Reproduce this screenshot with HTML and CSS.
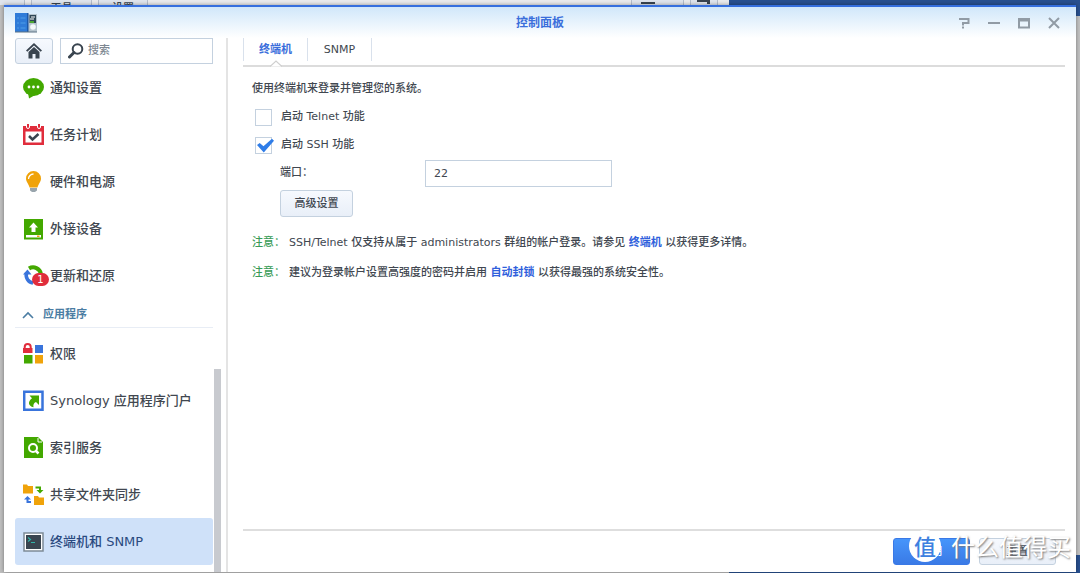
FILE: index.html
```html
<!DOCTYPE html>
<html lang="zh-CN">
<head>
<meta charset="utf-8">
<title>控制面板</title>
<link rel="stylesheet" href="styles.css">
</head>
<body>
<div class="desktop" aria-hidden="true">
  <div class="back-window">
    <div class="back-bar">
      <span class="back-tab back-tab-first"></span>
      <span class="back-tab back-tab-tools">工具</span>
      <span class="back-tab back-tab-set">设置</span>
      <span class="back-space"></span>
      <span class="back-tool"><i class="back-dash"></i></span>
      <span class="back-gap"></span>
      <span class="back-tool back-tool-small"><i class="back-mark"></i></span>
    </div>
  </div>
  <div class="back-right"></div>
</div>
<div class="window">
  <header class="titlebar">
    <svg class="app-icon" viewBox="0 0 22 20" aria-hidden="true">
      <rect x="12" y="1" width="10" height="18" fill="#b4c3cd"/>
      <rect x="0" y="0" width="13" height="19" fill="#2f7bd8"/>
      <rect x="12" y="0" width="1.500" height="19" fill="#1c58a8"/>
      <path d="M2 5h2M2 10h2M2 15h2M5.500 5h5M5.500 10h5M5.500 15h5" stroke="#4f9fe8" stroke-width="1"/>
      <rect x="14.500" y="2" width="6.500" height="8" fill="#2d4656"/>
      <path d="M16 4h4M15 6h4" stroke="#fff"/>
      <path d="M15 9h4" stroke="#54c728" stroke-width="1.500"/>
      <circle cx="18" cy="14" r="2.800" fill="#f3f8fa"/>
      <path d="M0 19h22" stroke="#5d7284"/>
    </svg>
    <h1 class="title">控制面板</h1>
    <div class="window-tools">
      <button class="tool" aria-label="帮助"><svg viewBox="0 0 12 12"><path d="M1 2h9.500v4H5v2.500M4 10.500h2" /></svg></button>
      <button class="tool" aria-label="最小化"><svg viewBox="0 0 12 12"><path d="M0 6h12"/></svg></button>
      <button class="tool" aria-label="最大化"><svg viewBox="0 0 12 12"><path d="M1 2h10v8.500H1zM1 3.500h10"/></svg></button>
      <button class="tool" aria-label="关闭"><svg viewBox="0 0 12 12"><path d="M1 1l10 10M11 1L1 11"/></svg></button>
    </div>
  </header>
  <div class="content">
    <aside class="sidebar">
      <div class="side-main">
        <div class="search-row">
          <button class="home" aria-label="主页"><svg viewBox="0 0 16 16"><path fill="#39444f" d="M8 0L0 7.500l1.300 1.300L8 2.600l6.700 6.200L16 7.500zM8 4L2.500 9v6.500h4V11h3v4.500h4V9z"/></svg></button>
          <label class="search">
            <svg viewBox="0 0 16 16" aria-hidden="true"><circle cx="9.500" cy="6" r="4.800" fill="none" stroke="#39444f" stroke-width="2"/><path d="M6 9.500L1.500 14" stroke="#39444f" stroke-width="3" stroke-linecap="round"/></svg>
            <input class="search-input" type="text" placeholder="搜索" aria-label="搜索">
          </label>
        </div>
        <nav class="nav">
          <a class="item" href="#"><svg class="icon" viewBox="0 0 22 22"><ellipse cx="10.500" cy="10" rx="10.500" ry="9" fill="#43a800"/><path d="M5 16l1 5.500 7-4z" fill="#43a800"/><g fill="#fff"><circle cx="6" cy="10" r="1.400"/><circle cx="10.500" cy="10" r="1.400"/><circle cx="15" cy="10" r="1.400"/></g></svg>通知设置</a>
          <a class="item" href="#"><svg class="icon" viewBox="0 0 22 22"><path d="M0 2h21v19H0z" fill="#e02d3c"/><path d="M2.500 7.500h16v11h-16z" fill="#fff"/><path d="M3.500 0v3a1.500 1.500 0 003 0V0M14.500 0v3a1.500 1.500 0 003 0V0" fill="#e02d3c" stroke="#fff"/><path d="M6 12l3.500 3.500L15.500 10" fill="none" stroke="#39444f" stroke-width="2.500"/></svg>任务计划</a>
          <a class="item" href="#"><svg class="icon" viewBox="0 0 22 22"><path d="M10.500 0a7.500 7.500 0 017.500 7.500c0 3.500-2.500 5-3.500 9h-8C5.500 12.500 3 11 3 7.500A7.500 7.500 0 0110.500 0z" fill="#f0a30a"/><path d="M5.500 8a5 5 0 015-5" fill="none" stroke="#fff" stroke-width="1.300"/><path d="M7 17h7v2.500L12 21H9l-2-1.500z" fill="#99a5ad"/></svg>硬件和电源</a>
          <a class="item" href="#"><svg class="icon" viewBox="0 0 22 22"><path d="M1 1h19v20.500H1z" fill="#43a800"/><path d="M10.500 4.500L15 9.500h-2.500V14h-4V9.500H6z" fill="#fff"/><path d="M3 17h15v2.500H3z" fill="#fff"/><path d="M14 17.500h2.500V19H14z" fill="#f0a30a"/></svg>外接设备</a>
          <a class="item" href="#"><span class="icon-wrap"><svg class="icon" viewBox="0 0 22 22"><path d="M6 3.500A8 8 0 0118 9" fill="none" stroke="#43a800" stroke-width="4"/><path d="M14 8.500h7.500l-3.500 5z" fill="#43a800"/><path d="M10 18A8 8 0 013.500 8" fill="none" stroke="#3974dc" stroke-width="3.500"/><path d="M0 9.500l4.500-5 4 5z" fill="#3974dc"/></svg><span class="badge">1</span></span>更新和还原</a>
          <button class="section" aria-expanded="true"><svg viewBox="0 0 12 8"><path d="M1 7l5-5 5 5" fill="none" stroke="#4b7da3" stroke-width="1.600"/></svg>应用程序</button>
          <a class="item" href="#"><svg class="icon" viewBox="0 0 22 22"><path d="M0 5h9.500v5H0z" fill="#e02d3c"/><path d="M1.700 6V4a3 3 0 016 0v2" fill="none" stroke="#e02d3c" stroke-width="2"/><path d="M12 2h8v8h-8z" fill="#3974dc"/><path d="M1 12h8.500v8.500H1z" fill="#43a800"/><path d="M12 12h8v8.500h-8z" fill="#f0a30a"/></svg>权限</a>
          <a class="item" href="#"><svg class="icon" viewBox="0 0 22 22"><path d="M1.200 1.700h18.300v18H1.200z" fill="#fff" stroke="#3974dc" stroke-width="2.500"/><path d="M6.500 5.500H16V15l-3-3c-2.200 1-3 2.600-2.500 5.200C5 16 4.500 11.500 9 8.200z" fill="#43a800"/></svg>Synology 应用程序门户</a>
          <a class="item" href="#"><svg class="icon" viewBox="0 0 22 22"><path d="M1 0h14l5 5v16H1z" fill="#43a800"/><path d="M15 1v4h4" fill="none" stroke="#fff" stroke-width="1"/><circle cx="10" cy="11" r="4" fill="none" stroke="#fff" stroke-width="2"/><path d="M12.500 13.500l3 3" stroke="#fff" stroke-width="2.500"/></svg>索引服务</a>
          <a class="item" href="#"><svg class="icon" viewBox="0 0 22 22"><path d="M0 .5h4l1 1.500h5v7.500H0zM11 12h4l1 1.500h5v7.500H11z" fill="#f0a30a"/><path d="M12.500 3.500h4.500v3" fill="none" stroke="#43a800" stroke-width="2"/><path d="M13.500 6h7L17 9.500z" fill="#43a800"/><path d="M8 18H4.500v-4" fill="none" stroke="#3974dc" stroke-width="2"/><path d="M1 15.500L4.500 12 8 15.500z" fill="#3974dc"/></svg>共享文件夹同步</a>
          <a class="item active" href="#" aria-current="page"><svg class="icon" viewBox="0 0 22 22"><path d="M1 2h19v18H1z" fill="#fff" stroke="#7d8b97" stroke-width="1.500"/><path d="M3 4h15v14H3z" fill="#39444f"/><path d="M5 6.500l2.500 2-2.500 2M8 11.500h4" fill="none" stroke="#32b2a8" stroke-width="1.200"/></svg>终端机和 SNMP</a>
        </nav>
      </div>
      <div class="scroll"><div class="thumb"></div></div>
    </aside>
    <main class="main">
      <div class="tabs" role="tablist">
        <button class="tab selected" role="tab" aria-selected="true">终端机<svg class="notch" viewBox="0 0 12 7" aria-hidden="true"><path d="M0 6.500L6 1l6 5.500" fill="#fff" stroke="#cfcfcf" stroke-width="1.200"/></svg></button>
        <button class="tab" role="tab" aria-selected="false">SNMP</button>
      </div>
      <form class="panel">
        <p class="line">使用终端机来登录并管理您的系统。</p>
        <label class="check"><input class="box" type="checkbox">启动 Telnet 功能</label>
        <label class="check"><input class="box" type="checkbox" checked>启动 SSH 功能</label>
        <div class="field"><label class="field-label" for="port">端口：</label><input class="port" id="port" type="text" value="22"></div>
        <button class="btn advanced" type="button">高级设置</button>
        <p class="note"><span class="green">注意：</span><span>SSH/Telnet 仅支持从属于 administrators 群组的帐户登录。请参见 <a class="link" href="#">终端机</a> 以获得更多详情。</span></p>
        <p class="note"><span class="green">注意：</span><span>建议为登录帐户设置高强度的密码并启用 <a class="link" href="#">自动封锁</a> 以获得最强的系统安全性。</span></p>
      </form>
      <footer class="footer">
        <button class="btn primary" type="button">应用</button>
        <button class="btn reset" type="button">重置</button>
      </footer>
    </main>
  </div>
</div>
<div class="watermark"><span class="mark">值</span><span>什么值得买</span></div>
</body>
</html>
```
FILE: styles.css
```css
* { box-sizing: border-box; }
body {
  margin: 0;
  height: 100vh;
  padding: 5px 4px 1px;
  overflow: hidden;
  position: relative;
  color: #414750;
  font: 500 11px/18px "DejaVu Sans", "Noto Sans CJK SC", sans-serif;
}
button, input { font: inherit; color: inherit; margin: 0; }
button { padding: 0; border: 0; background: none; cursor: pointer; }
a { color: inherit; text-decoration: none; }
p, h1 { margin: 0; }
svg { display: block; flex: none; }

/* Desktop behind the window */
.desktop { position: absolute; inset: 0; display: flex; background: #28508f; }
.back-window { width: 729px; background: #bfbfbf; }
.back-bar { height: 5px; display: flex; overflow: hidden; background: #e9eaec; }
.back-tab { flex: none; border-right: 1px solid #b4bdcb; background: #dfe4ec; text-align: center; }
.back-tab-first { width: 25px; }
.back-tab-tools { width: 61px; margin-left: 6px; }
.back-tab-set { width: 50px; margin-left: 6px; }
.back-tab-set, .back-tab-tools { border-left: 1px solid #b4bdcb; color: #39444f; }
.back-space { flex: 1; }
.back-tool { width: 53px; border: solid #b4bdcb; border-width: 0 1px; background: #dfe4ec; padding: 2px 0 0 9px; }
.back-gap { width: 6px; }
.back-tool-small { width: 28px; margin-right: 11px; padding: 0 0 0 6px; }
.back-dash { display: block; width: 14px; height: 2px; background: #39444f; }
.back-mark { display: block; width: 13px; height: 4px; border-top: 2px solid #39444f; border-right: 3px solid #39444f; }
.back-right { flex: 1; margin: 16px 0 18px; background: linear-gradient(#c2c2c2, #c2c2c2) right / 4px 100% no-repeat; }

/* Window */
.window { position: relative; height: 100%; display: flex; flex-direction: column; background: #fff; border-top: 2px solid #356fde; box-shadow: 0 0 4px rgba(0, 0, 0, .4); }
.titlebar { height: 31px; flex: none; display: grid; grid-template-columns: 1fr auto 1fr; align-items: center; padding: 0 11px; background: linear-gradient(#d0e7fa, #fff); }
.app-icon { width: 22px; height: 20px; }
.title { font-size: 12px; line-height: 18px; color: #3a6edb; font-weight: 700; }
.window-tools { display: flex; justify-content: flex-end; gap: 18px; padding-right: 5px; }
.tool svg { width: 12px; height: 12px; fill: none; stroke: #919ba5; stroke-width: 2; }
.content { flex: 1; min-height: 0; display: flex; }

/* Sidebar */
.sidebar { width: 224px; flex: none; display: flex; gap: 1px; padding-left: 11px; border-right: 2px solid #e4e4e4; }
.side-main { width: 198px; display: flex; flex-direction: column; }
.search-row { display: flex; gap: 7px; height: 26px; flex: none; }
.home { width: 38px; display: grid; place-items: center; border: 1px solid #c4d1df; border-radius: 3px; background: linear-gradient(#f6f9fe, #e9eff8); }
.home svg, .search svg { width: 16px; height: 16px; }
.search { flex: 1; min-width: 0; display: flex; align-items: center; gap: 4px; padding-left: 7px; border: 1px solid #c4d1df; }
.search-input { flex: 1; min-width: 0; padding: 0; border: 0; outline: 0; background: none; }
.search-input::placeholder { color: #7d8791; }
.nav { flex: 1; min-height: 0; overflow: hidden; }
.item { display: flex; align-items: center; gap: 5px; height: 47px; padding-left: 8px; border-radius: 3px; font-size: 13px; line-height: 20px; white-space: nowrap; }
.item.active { background: #cfe1f9; color: #2a4a80; }
.icon { width: 22px; height: 22px; }
.icon-wrap { position: relative; }
.badge { position: absolute; left: 9px; top: 8px; width: 17px; height: 13px; border-radius: 7px; background: #e02d3c; color: #fff; font-size: 10px; line-height: 13px; text-align: center; }
.section { width: 100%; height: 29px; margin-bottom: 2px; padding: 3px 0 0 7px; display: flex; align-items: center; gap: 9px; border-bottom: 1px solid #e8edf5; color: #4b7da3; font-weight: 700; }
.section svg { width: 12px; height: 8px; }
.scroll { width: 7px; padding-top: 331px; display: flex; }
.thumb { flex: 1; background: #c8cacf; }

/* Main area */
.main { flex: 1; min-width: 0; display: flex; flex-direction: column; padding: 0 11px 0 15px; }
.tabs { height: 29px; flex: none; display: flex; align-items: flex-start; border-bottom: 2px solid #dcdcdc; }
.tab { position: relative; width: 64px; height: 23px; border-right: 1px solid #d9e1ec; }
.tab.selected { width: 65px; border-left: 1px solid #d9e1ec; color: #3a6edb; font-weight: 700; }
.notch { position: absolute; left: 26px; top: 22px; width: 12px; height: 7px; }
.panel { flex: 1; min-height: 0; padding: 12px 9px 0; display: flex; flex-direction: column; align-items: flex-start; }
.line { height: 24px; line-height: 20px; }
.check { display: flex; align-items: center; gap: 9px; height: 28px; padding-left: 3px; }
.box { appearance: none; position: relative; width: 17px; height: 17px; border: 1px solid #c4d1df; background: #fff; }
.box:checked::before { content: ""; position: absolute; left: 1px; top: 0; width: 17px; height: 15px; background: #2f7de8; clip-path: polygon(0 50%, 16% 36%, 38% 59%, 88% 8%, 100% 22%, 40% 100%); }
.field { display: flex; align-items: center; height: 28px; padding-left: 28px; }
.field-label { width: 145px; }
.port { width: 187px; height: 27px; padding: 0 8px; border: 1px solid #c4d1df; background: #fff; }
.btn { height: 27px; border: 1px solid #c4d1df; border-radius: 3px; background: linear-gradient(#f6f9fe, #e9eff8); }
.advanced { width: 73px; margin: 3px 0 15px 28px; }
.note { display: flex; gap: 4px; height: 30px; align-items: flex-start; line-height: 22px; }
.green { color: #3a9c58; }
.link { color: #2f5fdc; font-weight: 700; }
.footer { flex: none; height: 43px; display: flex; justify-content: flex-end; align-items: flex-start; gap: 9px; padding: 7px 9px 0; border-top: 2px solid #dedede; }
.primary, .reset { width: 77px; }
.primary { color: #fff; border-color: #3a79e6; background: linear-gradient(#4695fb, #3a7ae6); }

.watermark { position: absolute; right: 9px; bottom: 10px; display: flex; align-items: center; gap: 10px; color: #fff; font: 24px/34px "Noto Sans CJK SC", sans-serif; text-shadow: 1px 1px 2px #777; pointer-events: none; }
.mark { width: 32px; height: 32px; border-radius: 50%; background: #fff; color: #3d80df; font-size: 22px; line-height: 30px; text-align: center; text-shadow: none; font-weight: 500; }
```
